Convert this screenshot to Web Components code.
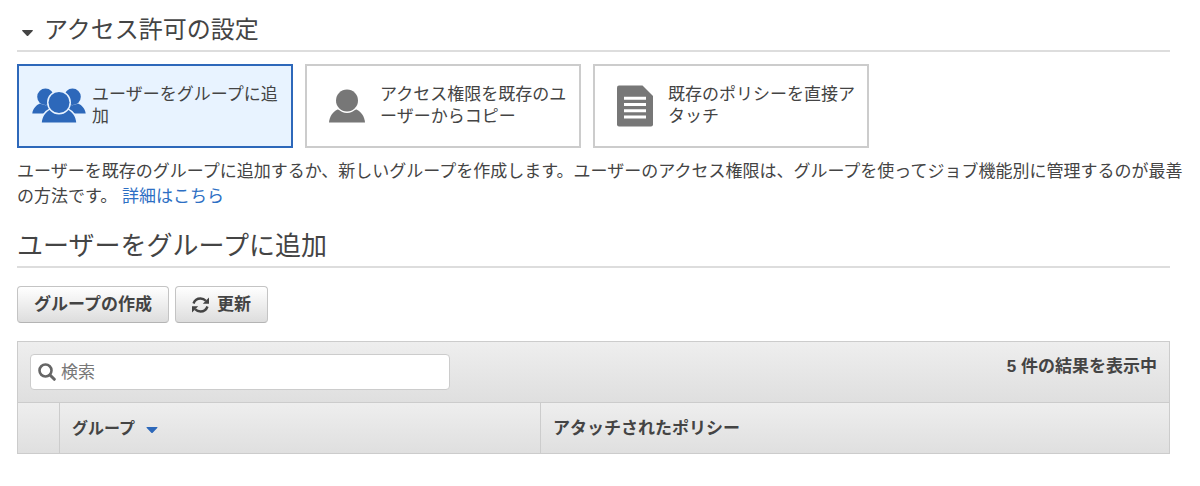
<!DOCTYPE html>
<html lang="ja">
<head>
<meta charset="utf-8">
<meta name="viewport" content="width=device-width, initial-scale=1">
<title>アクセス許可の設定</title>
<style>
  body {
    margin: 0;
    background: #fff;
    color: #444;
    font-family: "Liberation Sans", "Noto Sans CJK JP", sans-serif;
    font-size: 17px;
    line-height: 25px;
  }
</style>
</head>
<body>

<template id="section-heading">
  <style>
    :host {
      display: block;
      padding-bottom: 2px;
      border-bottom: 2px solid #ddd;
    }

    h2 {
      display: flex;
      align-items: center;
      margin: 0;
      font-size: 26px;
      font-weight: normal;
      line-height: 36px;
    }

    button {
      display: none;
      padding: 6px 11px 0 5px;
      border: 0;
      background: none;
      color: inherit;
    }

    svg {
      display: block;
    }

    :host([collapsible]) h2 {
      font-size: 24px;
    }

    :host([collapsible]) button {
      display: block;
    }
  </style>
  <h2>
    <button type="button" aria-label="折りたたむ" aria-expanded="true">
      <svg width="11" height="7" viewBox="0 0 11 7" fill="currentColor"><path d="M.8 0h9.4c.8 0 1 .6.5 1.1L6.2 5.7q-.7.6-1.4 0L.3 1.1C-.2.6 0 0 .8 0z"/></svg>
    </button>
    <slot></slot>
  </h2>
</template>

<template id="option-card">
  <style>
    :host {
      display: block;
      flex: 0 1 276px;
    }

    button {
      display: flex;
      align-items: center;
      gap: 5px;
      box-sizing: border-box;
      width: 100%;
      min-height: 84px;
      padding: 8px 8px 8px 12px;
      border: 2px solid #ccc;
      background: #fff;
      color: inherit;
      font: inherit;
      line-height: 22px;
      text-align: left;
    }

    .icon {
      display: flex;
      flex: 0 0 56px;
      justify-content: center;
      color: #777;
    }

    :host([selected]) button {
      border-color: #2d68ba;
      background: #e8f3ff;
    }

    :host([selected]) .icon {
      color: #2d68ba;
    }
  </style>
  <button type="button">
    <span class="icon"><slot name="icon"></slot></span>
    <span><slot></slot></span>
  </button>
</template>

<template id="tool-button">
  <style>
    :host {
      display: block;
    }

    button {
      display: flex;
      align-items: center;
      gap: 8px;
      padding: 5px 16px;
      border: 1px solid #c4c4c4;
      border-bottom-color: #b4b4b4;
      border-radius: 4px;
      background: linear-gradient(#fff, #ddd);
      color: inherit;
      font: inherit;
      font-weight: bold;
    }
  </style>
  <button type="button"><slot name="icon"></slot><slot></slot></button>
</template>

<template id="group-table">
  <style>
    :host {
      display: block;
      border: 1px solid #ccc;
    }

    .toolbar {
      display: flex;
      justify-content: space-between;
      align-items: flex-start;
      padding: 12px;
      background: linear-gradient(#eee, #dfdfdf);
    }

    label {
      display: flex;
      align-items: center;
      gap: 5px;
      box-sizing: border-box;
      flex: 0 1 420px;
      height: 36px;
      padding: 0 7px;
      border: 1px solid #ccc;
      border-radius: 4px;
      background: #fff;
      color: #666;
    }

    input {
      flex: 1;
      min-width: 0;
      padding: 0;
      border: 0;
      outline: 0;
      background: none;
      color: #444;
      font: inherit;
    }

    input::placeholder {
      color: #777;
    }

    table {
      width: 100%;
      border-collapse: collapse;
      table-layout: fixed;
    }

    tr {
      background: linear-gradient(#eee, #dfdfdf);
    }

    th {
      height: 50px;
      padding: 0 12px;
      border-top: 1px solid #ccc;
      text-align: left;
    }

    th + th {
      border-left: 1px solid #ccc;
    }

    .check {
      width: 17px;
    }

    .name {
      width: 456px;
    }

    .sort {
      display: flex;
      align-items: center;
      gap: 11px;
      padding: 0;
      border: 0;
      background: none;
      color: inherit;
      font: inherit;
      font-size: 16px;
    }

    .sort svg {
      padding-top: 4px;
      color: #2d68ba;
    }
  </style>
  <div class="toolbar">
    <label>
      <svg width="18" height="18" viewBox="0 0 18 18" fill="none" stroke="currentColor" aria-hidden="true">
        <circle cx="7.5" cy="7.5" r="6" stroke-width="2.6"/>
        <path d="M12 12l4.3 4.3" stroke-width="3" stroke-linecap="round"/>
      </svg>
      <input type="search" placeholder="検索" aria-label="検索">
    </label>
    <strong></strong>
  </div>
  <table>
    <thead>
      <tr>
        <th class="check"></th>
        <th class="name" scope="col">
          <button class="sort" type="button">
            グループ
            <svg width="12" height="7" viewBox="0 0 11 7" fill="currentColor"><path d="M.8 0h9.4c.8 0 1 .6.5 1.1L6.2 5.7q-.7.6-1.4 0L.3 1.1C-.2.6 0 0 .8 0z"/></svg>
          </button>
        </th>
        <th scope="col">アタッチされたポリシー</th>
      </tr>
    </thead>
  </table>
</template>

<template id="permissions-page">
  <style>
    :host {
      display: block;
      padding: 12px 30px 32px 17px;
    }

    .options {
      display: flex;
      gap: 12px;
      margin-top: 12px;
    }

    /* lets the description run a little way into the page's right padding */
    p {
      margin: 11px -24px 19px 0;
    }

    a {
      color: #2d6fc4;
      text-decoration: none;
    }

    .actions {
      display: flex;
      gap: 6px;
      margin: 18px 0;
    }
  </style>
  <section-heading collapsible>アクセス許可の設定</section-heading>
  <div class="options">
    <option-card selected>
      <svg slot="icon" width="54" height="36" viewBox="0 0 54 36" fill="currentColor" aria-hidden="true">
        <circle cx="13.5" cy="8.8" r="8.3"/>
        <path d="M.3 25.5C.8 21 4 17 8 15.500q6 3.500 11 0L20 25.500z"/>
        <circle cx="40.5" cy="8.8" r="8.3"/>
        <path d="M53.7 25.5C53.2 21 50 17 46 15.500q-6 3.500-11 0L34 25.500z"/>
        <g stroke="#e8f3ff" stroke-width="3" paint-order="stroke">
          <path d="M9.8 34.500C10.200 28.800 13.500 24 18.500 21.500h17C40.500 24 43.800 28.800 44.200 34.500z"/>
          <circle cx="27" cy="14.5" r="10.5"/>
        </g>
      </svg>
      ユーザーをグループに追加
    </option-card>
    <option-card>
      <svg slot="icon" width="36" height="36" viewBox="0 0 36 36" fill="currentColor" aria-hidden="true">
        <path d="M0 34.500C.4 28.800 3.500 24 8.500 21.500h19C32.500 24 35.600 28.800 36 34.500z"/>
        <circle cx="18" cy="12.5" r="11" stroke="#fff" stroke-width="3" paint-order="stroke"/>
      </svg>
      アクセス権限を既存のユーザーからコピー
    </option-card>
    <option-card>
      <svg slot="icon" width="36" height="42" viewBox="0 0 36 42" fill="currentColor" aria-hidden="true">
        <path d="M2 .5h23.500L36 11v28.500q0 2-2 2H2q-2 0-2-2v-37q0-2 2-2z"/>
        <path d="M7 13.200h22M7 19.500h22M7 25.800h22M7 32.100h22" stroke="#fff" stroke-width="3"/>
      </svg>
      既存のポリシーを直接アタッチ
    </option-card>
  </div>
  <p>ユーザーを既存のグループに追加するか、新しいグループを作成します。ユーザーのアクセス権限は、グループを使ってジョブ機能別に管理するのが最善の方法です。 <a href="#">詳細はこちら</a></p>
  <section-heading>ユーザーをグループに追加</section-heading>
  <div class="actions">
    <tool-button>グループの作成</tool-button>
    <tool-button>
      <svg slot="icon" width="17" height="16" viewBox="0 0 17 16" fill="none" stroke="currentColor" stroke-width="2.4" aria-hidden="true">
        <path d="M1.500 6.500C2.600 3.500 5.200 1.500 8.500 1.500c2.200 0 4 .8 5.300 2.200M15.500 9.500c-1.100 3-3.700 5-7 5-2.200 0-4-.8-5.300-2.200"/>
        <path d="M17 .5v6.200h-6.200zM0 15.500V9.300h6.200z" fill="currentColor" stroke="none"/>
      </svg>更新</tool-button>
  </div>
  <group-table count="5"></group-table>
</template>

<permissions-page></permissions-page>

<script>
class TemplateElement extends HTMLElement {
  constructor() {
    super();
    const tpl = document.getElementById(this.localName).content;
    this.attachShadow({mode: 'open'}).appendChild(document.importNode(tpl, true));
  }
}

class SectionHeading extends TemplateElement {}

class OptionCard extends TemplateElement {
  connectedCallback() {
    this.shadowRoot.querySelector('button').setAttribute('aria-pressed', this.hasAttribute('selected'));
  }
}

class ToolButton extends TemplateElement {}

class GroupTable extends TemplateElement {
  connectedCallback() {
    this.shadowRoot.querySelector('strong').textContent = `${this.getAttribute('count')} 件の結果を表示中`;
  }
}

class PermissionsPage extends TemplateElement {}

window.customElements.define('section-heading', SectionHeading);
window.customElements.define('option-card', OptionCard);
window.customElements.define('tool-button', ToolButton);
window.customElements.define('group-table', GroupTable);
window.customElements.define('permissions-page', PermissionsPage);
</script>
</body>
</html>
